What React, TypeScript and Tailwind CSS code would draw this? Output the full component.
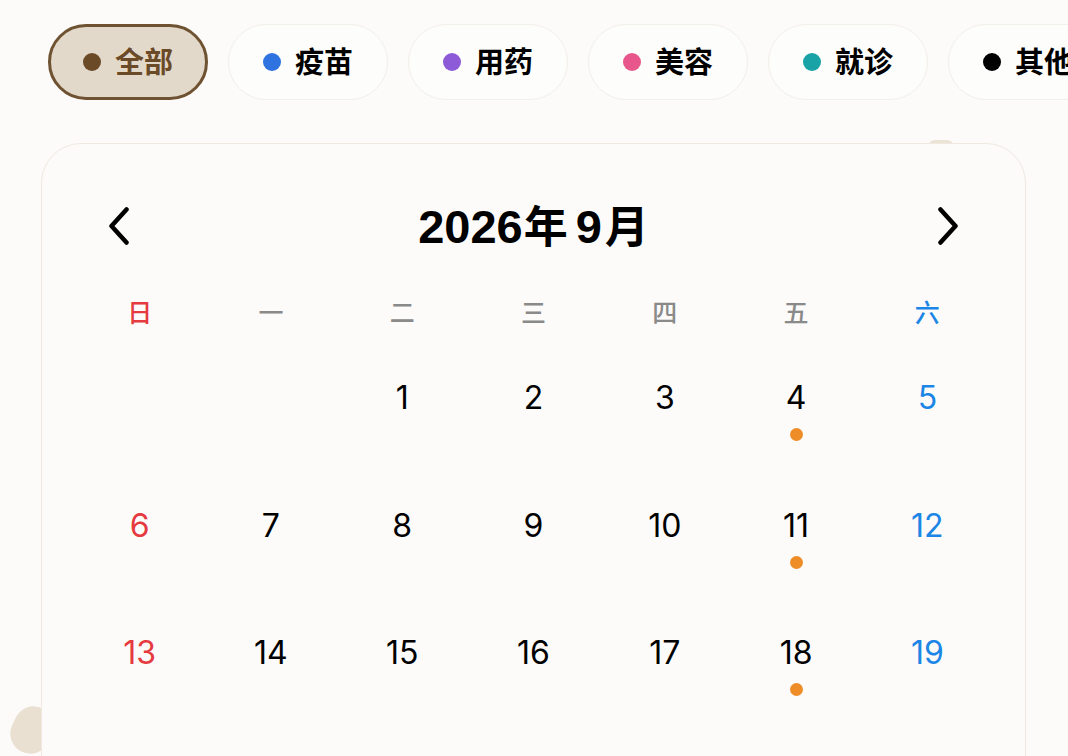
import React from "react";

const FONT = { fontFamily: 'Inter, "Noto Sans CJK SC", sans-serif' };
const TITLE_FONT = { fontFamily: '"Liberation Sans", "Noto Sans CJK SC", sans-serif' };

const chips = [
  { label: "全部", dot: "bg-[#6b4a28]", active: true },
  { label: "疫苗", dot: "bg-[#2e73df]" },
  { label: "用药", dot: "bg-[#8d5bd7]" },
  { label: "美容", dot: "bg-[#e8578b]" },
  { label: "就诊", dot: "bg-[#19a3a6]" },
  { label: "其他", dot: "bg-[#000000]" },
];

const weekdays = [
  { t: "日", c: "text-[#e53a3f]" },
  { t: "一", c: "text-[#8a8a8a]" },
  { t: "二", c: "text-[#8a8a8a]" },
  { t: "三", c: "text-[#8a8a8a]" },
  { t: "四", c: "text-[#8a8a8a]" },
  { t: "五", c: "text-[#8a8a8a]" },
  { t: "六", c: "text-[#1b86e6]" },
];

const cells: (number | null)[] = [null, null];
for (let d = 1; d <= 30; d++) cells.push(d);
while (cells.length % 7) cells.push(null);

const marked = new Set([4, 11, 18, 25]);

function Chevron({ dir }: { dir: "left" | "right" }) {
  return (
    <svg width="22" height="38" viewBox="0 0 22 38" fill="none">
      <path
        d={dir === "left" ? "M18.5 2.5 L3.5 19 L18.5 35.5" : "M3.5 2.5 L18.5 19 L3.5 35.5"}
        stroke="#000"
        strokeWidth="4.5"
        strokeLinecap="round"
        strokeLinejoin="round"
      />
    </svg>
  );
}

export default function App() {
  return (
    <div className="relative h-[756px] w-[1068px] overflow-hidden bg-[#fcfbf9]" style={FONT}>
      {/* decorative blobs behind the card */}
      <div className="absolute left-[12px] top-[706px] h-[48px] w-[40px] rotate-[25deg] rounded-full bg-[#e9e0d1]" />
      <div className="absolute left-[928px] top-[140px] h-[14px] w-[26px] rounded-full bg-[#ebe3d6]" />

      <div className="relative flex gap-[20px] pl-[48px] pt-[24px]">
        {chips.map((c) =>
          c.active ? (
            <div
              key={c.label}
              className="flex h-[76px] w-[160px] shrink-0 items-center justify-center gap-[14px] rounded-full border-[3px] border-[#6e5232] bg-[#e3d9ca]"
            >
              <span className={`h-[18px] w-[18px] rounded-full ${c.dot}`} />
              <span className="text-[29px] font-semibold leading-none text-[#6b4a28]">{c.label}</span>
            </div>
          ) : (
            <div
              key={c.label}
              className="flex h-[76px] w-[160px] shrink-0 items-center justify-center gap-[14px] rounded-full border border-[#f3efe9] bg-[#fdfdfc]"
            >
              <span className={`h-[18px] w-[18px] rounded-full ${c.dot}`} />
              <span className="text-[29px] font-semibold leading-none text-black">{c.label}</span>
            </div>
          )
        )}
      </div>

      <div className="relative ml-[41px] mt-[43px] w-[985px] rounded-t-[40px] border border-[#efe9e1] bg-[#fcfbf9] px-[32px] pt-[58px]">
        <div className="flex h-[48px] items-center justify-between px-[34px]">
          <Chevron dir="left" />
          <div className="flex items-baseline font-bold leading-none text-black" style={TITLE_FONT}>
            <span className="text-[47px]">2026</span>
            <span className="ml-[1px] text-[44px]">年</span>
            <span className="ml-[8px] text-[47px]">9</span>
            <span className="ml-[3px] text-[44px]">月</span>
          </div>
          <Chevron dir="right" />
        </div>

        <div className="mt-[43px] grid h-[40px] grid-cols-7 items-center">
          {weekdays.map((w) => (
            <div key={w.t} className={`text-center text-[25px] font-medium leading-none ${w.c}`}>
              {w.t}
            </div>
          ))}
        </div>

        <div className="grid grid-cols-7">
          {cells.map((d, i) => {
            const col = i % 7;
            const color = col === 0 ? "text-[#e53a3f]" : col === 6 ? "text-[#1b86e6]" : "text-black";
            return (
              <div key={i} className="flex h-[127.5px] flex-col items-center pt-[45px]">
                {d !== null && (
                  <>
                    <div className={`flex h-[40px] items-center text-[32px] leading-none ${color}`}>{d}</div>
                    {marked.has(d) && <span className="mt-[10px] h-[13px] w-[13px] rounded-full bg-[#ee8d28]" />}
                  </>
                )}
              </div>
            );
          })}
        </div>
      </div>
    </div>
  );
}
